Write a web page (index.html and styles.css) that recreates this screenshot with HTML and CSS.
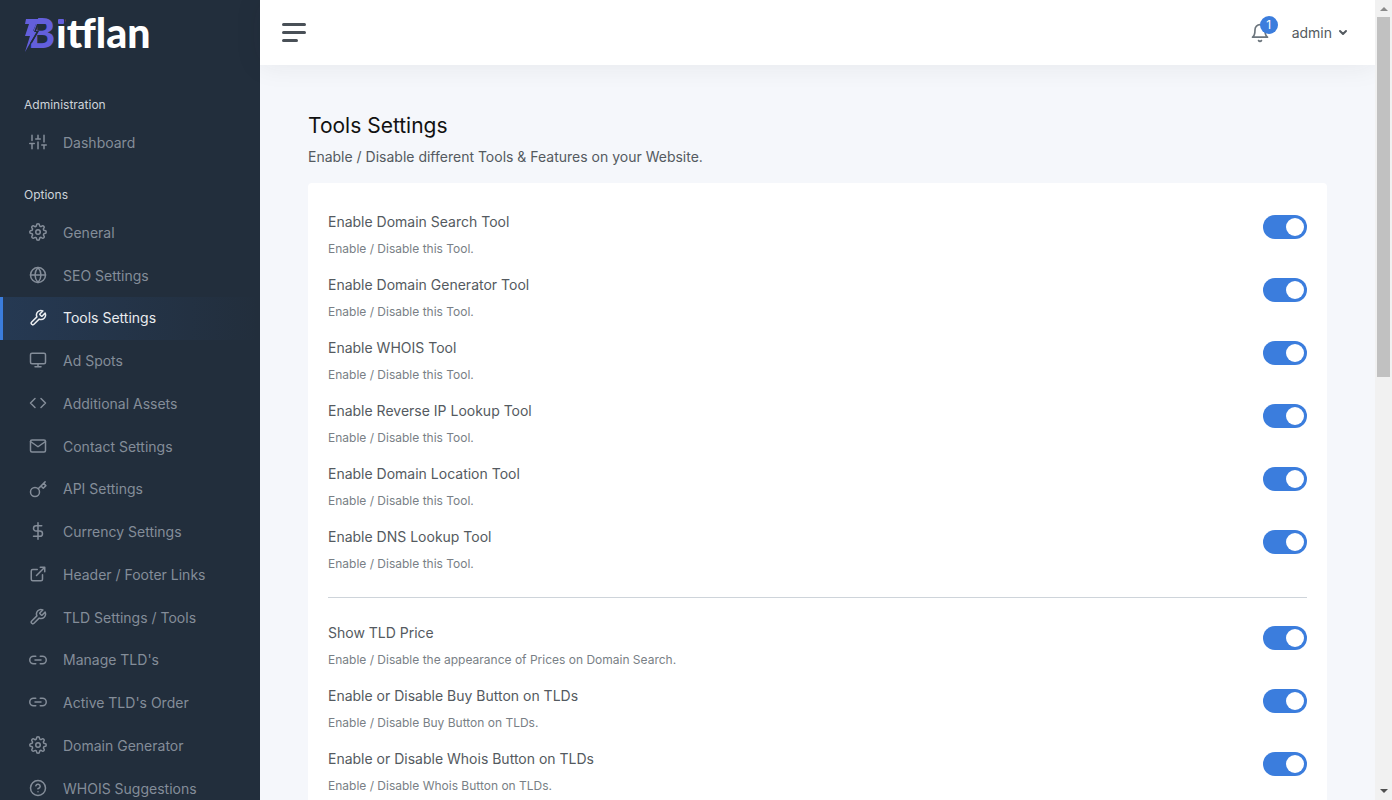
FILE: index.html
```html
<!DOCTYPE html>
<html lang="en">
<head>
<meta charset="utf-8">
<meta name="viewport" content="width=device-width, initial-scale=1">
<title>Tools Settings - Bitflan</title>
<link rel="stylesheet" href="styles.css">
</head>
<body>
<svg class="sprite" aria-hidden="true">
  <symbol id="sliders" viewBox="0 0 24 24"><path d="M4 21v-7M4 10V3M12 21v-9M12 8V3M20 21v-5M20 12V3M1 14h6M9 8h6M17 16h6"/></symbol>
  <symbol id="settings" viewBox="0 0 24 24"><circle cx="12" cy="12" r="3"/><path d="M19.4 15a1.65 1.65 0 0 0 .33 1.82l.06.06a2 2 0 0 1 0 2.83 2 2 0 0 1-2.83 0l-.06-.06a1.65 1.65 0 0 0-1.82-.33 1.65 1.65 0 0 0-1 1.51V21a2 2 0 0 1-2 2 2 2 0 0 1-2-2v-.09A1.65 1.65 0 0 0 9 19.4a1.65 1.65 0 0 0-1.82.33l-.06.06a2 2 0 0 1-2.83 0 2 2 0 0 1 0-2.83l.06-.06a1.65 1.65 0 0 0 .33-1.82 1.65 1.65 0 0 0-1.51-1H3a2 2 0 0 1-2-2 2 2 0 0 1 2-2h.09A1.65 1.65 0 0 0 4.6 9a1.65 1.65 0 0 0-.33-1.82l-.06-.06a2 2 0 0 1 0-2.83 2 2 0 0 1 2.83 0l.06.06a1.65 1.65 0 0 0 1.82.33H9a1.65 1.65 0 0 0 1-1.51V3a2 2 0 0 1 2-2 2 2 0 0 1 2 2v.09a1.65 1.65 0 0 0 1 1.51 1.65 1.65 0 0 0 1.82-.33l.06-.06a2 2 0 0 1 2.83 0 2 2 0 0 1 0 2.83l-.06.06a1.65 1.65 0 0 0-.33 1.82V9a1.65 1.65 0 0 0 1.51 1H21a2 2 0 0 1 2 2 2 2 0 0 1-2 2h-.09a1.65 1.65 0 0 0-1.51 1z"/></symbol>
  <symbol id="globe" viewBox="0 0 24 24"><circle cx="12" cy="12" r="10"/><path d="M2 12h20M12 2a15.3 15.3 0 0 1 4 10 15.3 15.3 0 0 1-4 10 15.3 15.3 0 0 1-4-10 15.3 15.3 0 0 1 4-10z"/></symbol>
  <symbol id="tool" viewBox="0 0 24 24"><path d="M14.7 6.3a1 1 0 0 0 0 1.4l1.6 1.6a1 1 0 0 0 1.4 0l3.77-3.77a6 6 0 0 1-7.94 7.94l-6.91 6.91a2.12 2.12 0 0 1-3-3l6.91-6.91a6 6 0 0 1 7.94-7.94l-3.76 3.76z"/></symbol>
  <symbol id="monitor" viewBox="0 0 24 24"><rect x="2" y="3" width="20" height="14" rx="2"/><path d="M8 21h8M12 17v4"/></symbol>
  <symbol id="code" viewBox="0 0 24 24"><path d="M16 18l6-6-6-6M8 6l-6 6 6 6"/></symbol>
  <symbol id="mail" viewBox="0 0 24 24"><path d="M4 4h16c1.1 0 2 .9 2 2v12c0 1.100-.9 2-2 2H4c-1.100 0-2-.9-2-2V6c0-1.100.9-2 2-2z"/><path d="M22 6l-10 7L2 6"/></symbol>
  <symbol id="key" viewBox="0 0 24 24"><circle cx="8" cy="16" r="6"/><path d="M12.300 11.700L21.500 2.500M16 8l3 3 3.500-3.500-3-3"/></symbol>
  <symbol id="dollar" viewBox="0 0 24 24"><path d="M12 1v22M17 5H9.500a3.500 3.500 0 0 0 0 7h5a3.500 3.500 0 0 1 0 7H6"/></symbol>
  <symbol id="external" viewBox="0 0 24 24"><path d="M18 13v6a2 2 0 0 1-2 2H5a2 2 0 0 1-2-2V8a2 2 0 0 1 2-2h6M15 3h6v6M10 14L21 3"/></symbol>
  <symbol id="link" viewBox="0 0 24 24"><path d="M15 7h3a5 5 0 0 1 5 5 5 5 0 0 1-5 5h-3m-6 0H6a5 5 0 0 1-5-5 5 5 0 0 1 5-5h3M8 12h8"/></symbol>
  <symbol id="help" viewBox="0 0 24 24"><circle cx="12" cy="12" r="10"/><path d="M9.090 9a3 3 0 0 1 5.830 1c0 2-3 3-3 3M12 17h.01"/></symbol>
  <symbol id="bell" viewBox="0 0 24 24"><path d="M18 8A6 6 0 0 0 6 8c0 7-3 9-3 9h18s-3-2-3-9M13.730 21a2 2 0 0 1-3.460 0"/></symbol>
</svg>

<div class="app">
  <nav class="sidebar" aria-label="Main">
    <a class="brand" href="#" aria-label="Bitflan">
      <svg class="brand-logo" viewBox="0 0 140 56">
        <text class="brand-initial" x="4" y="41">B</text>
        <path class="brand-gap" d="M0 9H15L9 25H14L3 44H0Z"/>
        <path class="brand-bolt" d="M2 12H24L22 17H12L9 24H13L1 45L6 29H1L5 17H1Z"/>
        <path class="brand-gap" d="M15 17L12 24H15L8 36H6L13 25H10L13 17Z"/>
        <text class="brand-name" x="32" y="41">itflan</text>
        <rect class="brand-gap" x="32" y="8" width="9" height="10"/>
        <rect class="brand-bolt" x="34" y="12" width="6" height="5" rx="1"/>
      </svg>
    </a>
    <h2 class="nav-heading">Administration</h2>
    <ul class="nav-list">
      <li><a class="nav-link" href="#"><svg class="icon"><use href="#sliders"/></svg><span>Dashboard</span></a></li>
    </ul>
    <h2 class="nav-heading">Options</h2>
    <ul class="nav-list">
      <li><a class="nav-link" href="#"><svg class="icon"><use href="#settings"/></svg><span>General</span></a></li>
      <li><a class="nav-link" href="#"><svg class="icon"><use href="#globe"/></svg><span>SEO Settings</span></a></li>
      <li><a class="nav-link active" href="#" aria-current="page"><svg class="icon"><use href="#tool"/></svg><span>Tools Settings</span></a></li>
      <li><a class="nav-link" href="#"><svg class="icon"><use href="#monitor"/></svg><span>Ad Spots</span></a></li>
      <li><a class="nav-link" href="#"><svg class="icon"><use href="#code"/></svg><span>Additional Assets</span></a></li>
      <li><a class="nav-link" href="#"><svg class="icon"><use href="#mail"/></svg><span>Contact Settings</span></a></li>
      <li><a class="nav-link" href="#"><svg class="icon"><use href="#key"/></svg><span>API Settings</span></a></li>
      <li><a class="nav-link" href="#"><svg class="icon"><use href="#dollar"/></svg><span>Currency Settings</span></a></li>
      <li><a class="nav-link" href="#"><svg class="icon"><use href="#external"/></svg><span>Header / Footer Links</span></a></li>
      <li><a class="nav-link" href="#"><svg class="icon"><use href="#tool"/></svg><span>TLD Settings / Tools</span></a></li>
      <li><a class="nav-link" href="#"><svg class="icon"><use href="#link"/></svg><span>Manage TLD's</span></a></li>
      <li><a class="nav-link" href="#"><svg class="icon"><use href="#link"/></svg><span>Active TLD's Order</span></a></li>
      <li><a class="nav-link" href="#"><svg class="icon"><use href="#settings"/></svg><span>Domain Generator</span></a></li>
      <li><a class="nav-link" href="#"><svg class="icon"><use href="#help"/></svg><span>WHOIS Suggestions</span></a></li>
    </ul>
  </nav>

  <div class="page">
    <header class="topbar">
      <button class="menu-button" type="button" aria-label="Toggle sidebar"><span class="bar"></span><span class="bar"></span><span class="bar short"></span></button>
      <div class="topbar-right">
        <button class="bell-button" type="button" aria-label="Notifications"><svg class="bell"><use href="#bell"/></svg><span class="badge">1</span></button>
        <button class="user-button" type="button">admin<svg class="caret" viewBox="0 0 10 8"><path d="M2 2l3 3 3-3"/></svg></button>
      </div>
    </header>
    <main class="content">
      <h1 class="title">Tools Settings</h1>
      <p class="subtitle">Enable / Disable different Tools &amp; Features on your Website.</p>
      <form class="card">
        <div class="group">
          <div class="setting"><div class="setting-text"><label for="s1">Enable Domain Search Tool</label><small id="d1">Enable / Disable this Tool.</small></div><input class="switch" type="checkbox" role="switch" id="s1" aria-describedby="d1" checked></div>
          <div class="setting"><div class="setting-text"><label for="s2">Enable Domain Generator Tool</label><small id="d2">Enable / Disable this Tool.</small></div><input class="switch" type="checkbox" role="switch" id="s2" aria-describedby="d2" checked></div>
          <div class="setting"><div class="setting-text"><label for="s3">Enable WHOIS Tool</label><small id="d3">Enable / Disable this Tool.</small></div><input class="switch" type="checkbox" role="switch" id="s3" aria-describedby="d3" checked></div>
          <div class="setting"><div class="setting-text"><label for="s4">Enable Reverse IP Lookup Tool</label><small id="d4">Enable / Disable this Tool.</small></div><input class="switch" type="checkbox" role="switch" id="s4" aria-describedby="d4" checked></div>
          <div class="setting"><div class="setting-text"><label for="s5">Enable Domain Location Tool</label><small id="d5">Enable / Disable this Tool.</small></div><input class="switch" type="checkbox" role="switch" id="s5" aria-describedby="d5" checked></div>
          <div class="setting"><div class="setting-text"><label for="s6">Enable DNS Lookup Tool</label><small id="d6">Enable / Disable this Tool.</small></div><input class="switch" type="checkbox" role="switch" id="s6" aria-describedby="d6" checked></div>
        </div>
        <hr class="divider">
        <div class="group">
          <div class="setting"><div class="setting-text"><label for="s7">Show TLD Price</label><small id="d7">Enable / Disable the appearance of Prices on Domain Search.</small></div><input class="switch" type="checkbox" role="switch" id="s7" aria-describedby="d7" checked></div>
          <div class="setting"><div class="setting-text"><label for="s8">Enable or Disable Buy Button on TLDs</label><small id="d8">Enable / Disable Buy Button on TLDs.</small></div><input class="switch" type="checkbox" role="switch" id="s8" aria-describedby="d8" checked></div>
          <div class="setting"><div class="setting-text"><label for="s9">Enable or Disable Whois Button on TLDs</label><small id="d9">Enable / Disable Whois Button on TLDs.</small></div><input class="switch" type="checkbox" role="switch" id="s9" aria-describedby="d9" checked></div>
        </div>
      </form>
    </main>
  </div>

  <div class="scrollbar" aria-hidden="true">
    <svg class="scroll-arrow up" viewBox="0 0 17 17"><path d="M5 11l4-4 4 4z"/></svg>
    <div class="scroll-thumb"></div>
    <svg class="scroll-arrow down" viewBox="0 0 17 17"><path d="M5 6l4 4 4-4z"/></svg>
  </div>
</div>
</body>
</html>
```
FILE: styles.css
```css
* { box-sizing: border-box; }
body {
  margin: 0;
  font-family: Inter, "Liberation Sans", sans-serif;
  font-size: 14px;
  color: #545a60;
  background: #f5f7fb;
}
button { font: inherit; color: inherit; background: none; border: 0; padding: 0; cursor: pointer; }
.sprite { display: none; }
.app { display: flex; height: 100vh; overflow: hidden; }

/* Sidebar */
.sidebar { flex: 0 0 260px; background: #222e3c; overflow: hidden; }
.brand { display: block; padding: 7px 24px 0; }
.brand-logo { display: block; width: 140px; height: 56px; }
.brand-logo text { font-family: Lato, sans-serif; font-weight: 900; font-size: 41px; }
.brand-initial, .brand-bolt { fill: #635fdc; }
.brand-gap { fill: #222e3c; }
.brand-name { fill: #fff; }
.nav-heading { margin: 0 24px 7px; font-size: 12px; line-height: 20px; font-weight: 400; color: #ced4da; }
.brand + .nav-heading { margin-top: 32px; }
.nav-list + .nav-heading { margin-top: 20px; }
.nav-list { margin: 0; padding: 0; list-style: none; }
.nav-link {
  display: flex;
  align-items: center;
  gap: 16px;
  padding: 10px 26px;
  border-left: 3px solid transparent;
  font-size: 14px;
  line-height: 1.625;
  color: #848d99;
  text-decoration: none;
}
.nav-link.active {
  border-left-color: #3b7ddd;
  background: linear-gradient(90deg, rgba(59, 125, 221, .14), rgba(59, 125, 221, 0));
  color: #e9ecef;
}
.icon, .bell, .caret { fill: none; stroke: currentColor; stroke-linecap: round; stroke-linejoin: round; }
.icon { width: 18px; height: 18px; stroke-width: 2; margin-bottom: 2px; }

/* Top bar */
.page { flex: 1; min-width: 0; }
.topbar {
  display: flex;
  align-items: center;
  justify-content: space-between;
  height: 65px;
  padding: 0 27px 0 22px;
  background: #fff;
  box-shadow: 0 0 28px rgba(33, 37, 41, .08);
}
.menu-button { display: grid; gap: 5px; }
.bar { width: 24px; height: 3px; border-radius: 2px; background: #495057; }
.bar.short { width: 16px; }
.topbar-right { display: flex; align-items: center; gap: 22px; }
.bell-button { position: relative; display: flex; color: #6c757d; }
.bell { width: 20px; height: 20px; stroke-width: 2; }
.badge {
  position: absolute;
  top: -7px;
  right: -8px;
  width: 18px;
  line-height: 18px;
  border-radius: 9px;
  background: #3b7ddd;
  color: #fff;
  font-size: 12px;
  text-align: center;
}
.user-button { display: flex; align-items: center; gap: 6px; }
.caret { width: 10px; height: 8px; stroke-width: 2; }

/* Content */
.content { padding: 48px; }
.title { margin: 0; font-size: 21px; line-height: 26px; font-weight: 400; color: #111; }
.subtitle { margin: 8px 0 16px; line-height: 20px; }
.card { padding: 29px 20px; border-radius: 4px; background: #fff; }
.group { display: grid; gap: 17px; }
.setting { display: flex; justify-content: space-between; align-items: flex-start; }
.setting-text { display: grid; gap: 8px; }
.setting label { line-height: 20px; }
.setting small { font-size: 12px; line-height: 18px; color: #797f86; }
.divider { margin: 24px 0 25px; border: 0; border-top: 1px solid #ced4da; }
.switch {
  appearance: none;
  display: flex;
  align-items: center;
  width: 44px;
  height: 24px;
  margin: 3px 0 0;
  padding: 0 3px;
  border-radius: 12px;
  background: #adb5bd;
  cursor: pointer;
}
.switch::before { content: ""; width: 18px; height: 18px; border-radius: 50%; background: #fff; }
.switch:checked { justify-content: flex-end; background: #3b7ddd; }

/* Scroll track */
.scrollbar { flex: 0 0 17px; display: flex; flex-direction: column; align-items: center; background: #f1f1f1; }
.scroll-arrow { width: 17px; height: 17px; flex: none; }
.scroll-arrow.up { fill: #8a8a8a; }
.scroll-arrow.down { fill: #505050; margin-top: auto; }
.scroll-thumb { width: 13px; height: 45%; background: #c1c1c1; }
```
